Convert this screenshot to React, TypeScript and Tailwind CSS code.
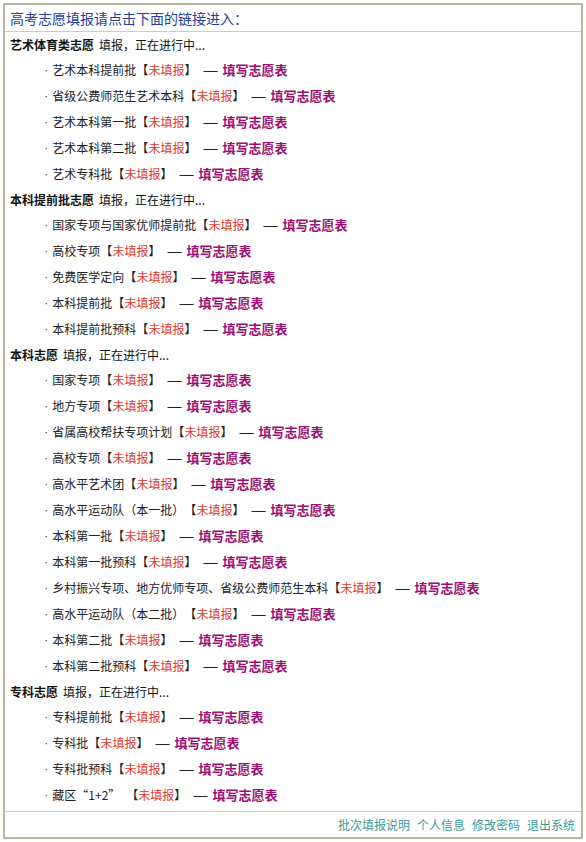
import React from 'react';

type Section = {
  title: string;
  items: string[];
};

const sections: Section[] = [
  {
    title: '艺术体育类志愿',
    items: ['艺术本科提前批', '省级公费师范生艺术本科', '艺术本科第一批', '艺术本科第二批', '艺术专科批'],
  },
  {
    title: '本科提前批志愿',
    items: ['国家专项与国家优师提前批', '高校专项', '免费医学定向', '本科提前批', '本科提前批预科'],
  },
  {
    title: '本科志愿',
    items: [
      '国家专项',
      '地方专项',
      '省属高校帮扶专项计划',
      '高校专项',
      '高水平艺术团',
      '高水平运动队（本一批）',
      '本科第一批',
      '本科第一批预科',
      '乡村振兴专项、地方优师专项、省级公费师范生本科',
      '高水平运动队（本二批）',
      '本科第二批',
      '本科第二批预科',
    ],
  },
  {
    title: '专科志愿',
    items: ['专科提前批', '专科批', '专科批预科', '藏区“1+2”'],
  },
];

const footerLinks = ['批次填报说明', '个人信息', '修改密码', '退出系统'];

const latin = { fontFamily: '"Liberation Sans", Arial, sans-serif' };

const ItemRow = ({ name }: { name: string }) => {
  // the quoted name has a space before its bracket
  const gap = name.endsWith('”');
  return (
    <div className="flex h-[26px] items-center pl-[39px] text-[12px] text-[#222]">
      <span className="mr-[4px] text-[13px] text-[#555]" style={latin}>
        ·
      </span>
      <span>{name}</span>
      <span className={gap ? 'ml-[6px]' : ''}>【</span>
      <span className="text-[#e0392a]">未填报</span>
      <span>】</span>
      <span className="ml-[7px] mr-[5px] text-[14px]" style={latin}>
        —
      </span>
      <a href="#" className="text-[13px] font-bold text-[#9c0f72]">
        填写志愿表
      </a>
    </div>
  );
};

export default function App() {
  return (
    <div
      className="h-[842px] w-[586px] bg-white p-[3px]"
      style={{ fontFamily: '"Noto Sans CJK SC", "Noto Sans", sans-serif' }}
    >
      <div className="flex h-full flex-col border-2 border-[#b9b79e]">
        <div className="flex h-[27px] items-center border-b border-[#cfcdbd] pl-[5px] text-[14px] text-[#23409c]">
          高考志愿填报请点击下面的链接进入：
        </div>

        <div className="flex-1 pb-[2px]">
          {sections.map((s) => (
            <div key={s.title}>
              <div className="flex h-[25px] items-center pl-[5px] pt-[1px] text-[12px] text-[#111]">
                <span className="font-bold">{s.title}</span>
                <span className="ml-[5px]">填报，正在进行中...</span>
              </div>
              {s.items.map((it) => (
                <ItemRow key={it} name={it} />
              ))}
            </div>
          ))}
        </div>

        <div className="flex h-[26px] items-center justify-end gap-[7px] border-t border-[#cfcdbd] pr-[6px] text-[12px] text-[#3a9a96]">
          {footerLinks.map((l) => (
            <a key={l} href="#">
              {l}
            </a>
          ))}
        </div>
      </div>
    </div>
  );
}
